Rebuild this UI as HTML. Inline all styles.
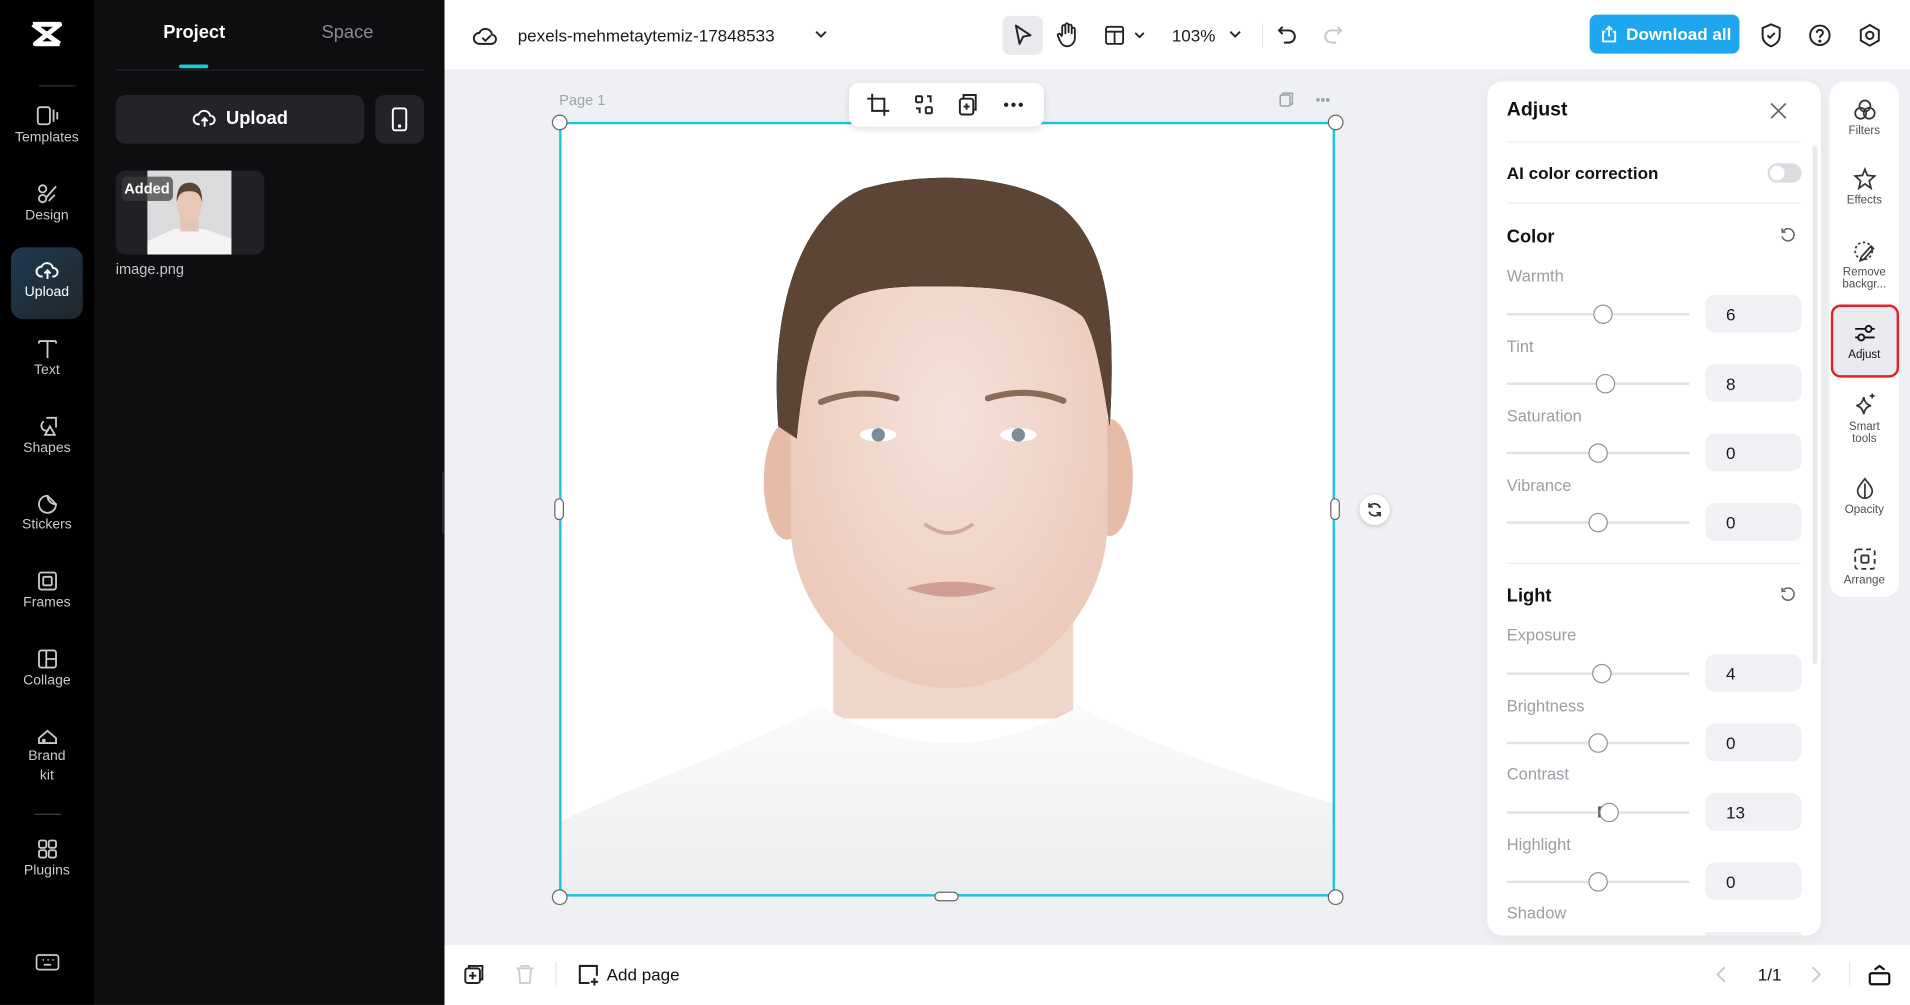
<!DOCTYPE html>
<html><head><meta charset="utf-8"><style>
*{box-sizing:border-box;margin:0;padding:0}
html,body{width:1910px;height:1005px;overflow:hidden;background:#fff}
#s{position:absolute;left:0;top:0;width:1568px;height:825px;transform:scale(1.21811);transform-origin:0 0;font-family:"Liberation Sans",sans-serif;overflow:hidden;background:#fff}
.a{position:absolute}
.rail{left:0;top:0;width:78px;height:825px;background:#000}
.ri{position:absolute;left:0;width:77px;text-align:center;color:#c9cacc;font-size:11.5px}
.ri svg{display:block;margin:0 auto 3px}
.panel{left:77px;top:0;width:288px;height:825px;background:#0e0e10}
.lbl{position:absolute;left:1237px;font-size:13.5px;color:#9a9ea5}
.trk{position:absolute;left:1237px;width:150px;height:2px;background:#dfe2e6}
.th{position:absolute;width:16px;height:16px;border-radius:50%;background:#fff;border:1px solid #8d939b}
.in{position:absolute;left:1400px;width:79px;height:31px;border-radius:8px;background:#eff1f4;font-size:14px;color:#1a1a1a;padding:8px 0 0 17px}
.rt{position:absolute;left:1502px;width:57px;text-align:center;font-size:9.5px;color:#4a4f57;line-height:10px}
.rt svg{display:block;margin:0 auto 3px}
</style></head><body><div id="s">
<div class="a rail"></div>
<svg class="a" style="left:24px;top:16px" width="28" height="24" viewBox="0 0 28 24"><path d="M3 4h22L5 20h20M3 4l22 16" stroke="#fff" stroke-width="4" fill="none" stroke-linejoin="round"/></svg>
<div class="a" style="left:32px;top:70px;width:30px;height:1px;background:#333"></div>
<div class="ri" style="top:86px"><svg width="20" height="18" viewBox="0 0 20 18" fill="none" stroke="#c9cacc" stroke-width="1.5"><rect x="2" y="2" width="10" height="14" rx="2"/><path d="M15 4v10M18 6v6"/></svg>Templates</div>
<div class="ri" style="top:150px"><svg width="20" height="18" viewBox="0 0 20 18" fill="none" stroke="#c9cacc" stroke-width="1.5"><circle cx="6" cy="5" r="3"/><circle cx="6" cy="13" r="3"/><path d="M9 12l8-9M11 15l5-5"/></svg>Design</div>
<div class="a" style="left:9px;top:203px;width:59px;height:59px;border-radius:10px;background:linear-gradient(135deg,#1d3a52,#222629)"></div>
<div class="ri" style="top:213px;color:#fff"><svg width="20" height="18" viewBox="0 0 20 18" fill="none" stroke="#fff" stroke-width="1.6"><path d="M6 14H5a4 4 0 010-8 5 5 0 019.5 1A3.5 3.5 0 0115 14h-1M10 16V9M7.5 11.5L10 9l2.5 2.5"/></svg>Upload</div>
<div class="ri" style="top:277px"><svg width="20" height="18" viewBox="0 0 20 18" fill="none" stroke="#c9cacc" stroke-width="1.5"><path d="M3 3h14M10 3v14M3 3v2M17 3v2"/></svg>Text</div>
<div class="ri" style="top:341px"><svg width="20" height="18" viewBox="0 0 20 18" fill="none" stroke="#c9cacc" stroke-width="1.5"><path d="M7 5a4 4 0 104 7M9 2h8v8M8 16l4-7 4 7z"/></svg>Shapes</div>
<div class="ri" style="top:404px"><svg width="20" height="18" viewBox="0 0 20 18" fill="none" stroke="#c9cacc" stroke-width="1.5"><path d="M17 10a7 7 0 11-7-7c0 4 3 7 7 7zM10 3l7 7"/></svg>Stickers</div>
<div class="ri" style="top:468px"><svg width="20" height="18" viewBox="0 0 20 18" fill="none" stroke="#c9cacc" stroke-width="1.5"><rect x="3" y="2" width="14" height="14" rx="2"/><rect x="6.5" y="5.5" width="7" height="7" rx="1"/></svg>Frames</div>
<div class="ri" style="top:532px"><svg width="20" height="18" viewBox="0 0 20 18" fill="none" stroke="#c9cacc" stroke-width="1.5"><rect x="3" y="2" width="14" height="14" rx="2"/><path d="M9 2v14M9 9h8"/></svg>Collage</div>
<div class="ri" style="top:595px;line-height:16px"><svg width="20" height="18" viewBox="0 0 20 18" fill="none" stroke="#c9cacc" stroke-width="1.5" style="margin-bottom:0"><path d="M3 15h14v-4L10 5 3 11z"/><circle cx="7" cy="13" r="0.8"/></svg>Brand<br>kit</div>
<div class="a" style="left:28px;top:668px;width:22px;height:1px;background:#444"></div>
<div class="ri" style="top:688px"><svg width="20" height="18" viewBox="0 0 20 18" fill="none" stroke="#c9cacc" stroke-width="1.5"><rect x="3" y="2" width="6" height="6" rx="1.5"/><rect x="11" y="2" width="6" height="6" rx="1.5"/><rect x="3" y="10" width="6" height="6" rx="1.5"/><rect x="11" y="10" width="6" height="6" rx="1.5"/></svg>Plugins</div>
<svg class="a" style="left:29px;top:783px" width="20" height="15" viewBox="0 0 20 15" fill="none" stroke="#c9cacc" stroke-width="1.4"><rect x="1" y="1" width="18" height="12" rx="2"/><path d="M6 5h1M10 5h1M14 5h1M7 9h6"/></svg>

<div class="a panel"></div>
<div class="a" style="left:134px;top:18px;font-size:15px;font-weight:bold;color:#fff">Project</div>
<div class="a" style="left:264px;top:18px;font-size:15px;color:#8a8c91">Space</div>
<div class="a" style="left:147px;top:53px;width:24px;height:3px;border-radius:2px;background:#1ec7dc"></div>
<div class="a" style="left:95px;top:57px;width:253px;height:1px;background:#26272b"></div>
<div class="a" style="left:95px;top:78px;width:204px;height:40px;border-radius:8px;background:#232428;color:#fff;font-size:15px;font-weight:bold;text-align:center;line-height:40px"><svg width="20" height="16" viewBox="0 0 20 16" fill="none" stroke="#fff" stroke-width="1.6" style="vertical-align:-3px;margin-right:8px"><path d="M6 13H5a4 4 0 010-8 5 5 0 019.5 1A3.5 3.5 0 0115 13h-1M10 15V8M7.5 10.5L10 8l2.5 2.5"/></svg>Upload</div>
<div class="a" style="left:308px;top:78px;width:40px;height:40px;border-radius:8px;background:#232428"><svg style="position:absolute;left:13px;top:10px" width="14" height="20" viewBox="0 0 14 20" fill="none" stroke="#fff" stroke-width="1.6"><rect x="1.5" y="1" width="11" height="18" rx="2"/><circle cx="7" cy="15.5" r="0.6" fill="#fff"/></svg></div>
<div class="a" style="left:95px;top:140px;width:122px;height:69px;border-radius:8px;background:#202125;overflow:hidden">
<div class="a" style="left:26px;top:0;width:69px;height:69px;background:#dadbdd">
<svg width="69" height="69" viewBox="0 0 69 69"><path d="M0 69V58l22-10h25l22 8v13z" fill="#f4f4f4"/><rect x="27" y="36" width="15" height="14" fill="#e1c4b6"/><ellipse cx="34.5" cy="28" rx="10" ry="14" fill="#e6c7b8"/><path d="M24 26c0-12 4-16 10.5-16S45 14 45 26c-2-6-3-9-10.5-9S26 20 24 26z" fill="#5a4535"/></svg></div>
<div class="a" style="left:5px;top:5px;width:42px;height:20px;border-radius:4px;background:rgba(60,60,60,.7);color:#fff;font-size:12px;font-weight:bold;padding:3px 0 0 2px">Added</div></div>
<div class="a" style="left:95px;top:214px;font-size:12px;color:#c7c8cb">image.png</div>
<div class="a" style="left:363px;top:388px;width:8px;height:50px;border-radius:0 6px 6px 0;background:#2a2b2f"></div>

<!-- top bar -->
<div class="a" style="left:365px;top:0;width:1203px;height:57px;background:#fff"></div>
<svg class="a" style="left:388px;top:19px" width="22" height="20" viewBox="0 0 22 20" fill="none" stroke="#222" stroke-width="1.6"><path d="M6 17H5.5a4.5 4.5 0 010-9 5.5 5.5 0 0110.5 1.5A3.8 3.8 0 0116 17z"/><path d="M8 12l2.5 2.5L15 10"/></svg>
<div class="a" style="left:425px;top:21px;font-size:14px;color:#1a1a1a">pexels-mehmetaytemiz-17848533</div>
<svg class="a" style="left:668px;top:24px" width="12" height="8" viewBox="0 0 12 8"><path d="M2 2l4 4 4-4" stroke="#222" stroke-width="1.5" fill="none"/></svg>
<div class="a" style="left:823px;top:13px;width:33px;height:32px;border-radius:6px;background:#e8eaed"></div>
<svg class="a" style="left:831px;top:19px" width="18" height="20" viewBox="0 0 18 20" fill="none" stroke="#222" stroke-width="1.6"><path d="M3 2l12 8-6 1-3 6z" stroke-linejoin="round"/></svg>
<svg class="a" style="left:866px;top:18px" width="20" height="22" viewBox="0 0 20 22" fill="none" stroke="#222" stroke-width="1.5"><path d="M6 11V4a1.3 1.3 0 012.6 0v6M8.6 9V2.5a1.3 1.3 0 012.6 0V9M11.2 9V3.5a1.3 1.3 0 012.6 0V10M13.8 10V6a1.3 1.3 0 012.6 0v7c0 4-3 7-6.5 7-3 0-4.5-2-6-5L2.5 11.5a1.2 1.2 0 012-1.3L6 12"/></svg>
<svg class="a" style="left:906px;top:20px" width="36" height="18" viewBox="0 0 36 18" fill="none" stroke="#222" stroke-width="1.5"><rect x="2" y="2" width="14" height="14" rx="1.5"/><path d="M2 6h14M9 6v10M26 7l3.5 3.5L33 7"/></svg>
<div class="a" style="left:962px;top:21px;font-size:14px;color:#1a1a1a">103%</div>
<svg class="a" style="left:1008px;top:24px" width="12" height="8" viewBox="0 0 12 8"><path d="M2 2l4 4 4-4" stroke="#222" stroke-width="1.5" fill="none"/></svg>
<div class="a" style="left:1036px;top:19px;width:1px;height:20px;background:#e3e5e8"></div>
<svg class="a" style="left:1047px;top:19px" width="20" height="20" viewBox="0 0 20 20" fill="none" stroke="#222" stroke-width="1.6"><path d="M6 3L3 6l3 3M3 6h8a5 5 0 010 10H7"/></svg>
<svg class="a" style="left:1084px;top:19px" width="20" height="20" viewBox="0 0 20 20" fill="none" stroke="#c5c8cc" stroke-width="1.6"><path d="M14 3l3 3-3 3M17 6H9a5 5 0 000 10h4"/></svg>
<div class="a" style="left:1305px;top:12px;width:123px;height:32px;border-radius:6px;background:#1ea7ee;color:#fff;font-size:14px;font-weight:bold;line-height:32px;padding-left:30px">Download all</div>
<svg class="a" style="left:1313px;top:20px" width="16" height="16" viewBox="0 0 16 16" fill="none" stroke="#fff" stroke-width="1.5"><path d="M5 6H3v8h10V6h-2M8 10V2M5.5 4.5L8 2l2.5 2.5"/></svg>
<svg class="a" style="left:1444px;top:18px" width="20" height="22" viewBox="0 0 20 22" fill="none" stroke="#222" stroke-width="1.6"><path d="M10 2l7 3v6c0 4.5-3 7.5-7 9-4-1.5-7-4.5-7-9V5z"/><path d="M7 11l2 2 4-4"/></svg>
<svg class="a" style="left:1484px;top:19px" width="20" height="20" viewBox="0 0 20 20" fill="none" stroke="#222" stroke-width="1.6"><circle cx="10" cy="10" r="8"/><path d="M7.5 8a2.5 2.5 0 115 0c0 1.8-2.5 2-2.5 4"/><circle cx="10" cy="14.8" r="0.5" fill="#222"/></svg>
<svg class="a" style="left:1525px;top:19px" width="20" height="20" viewBox="0 0 20 20" fill="none" stroke="#222" stroke-width="1.6"><path d="M10 1.5l7.4 4.25v8.5L10 18.5l-7.4-4.25v-8.5z"/><circle cx="10" cy="10" r="3"/></svg>

<!-- canvas -->
<div class="a" style="left:365px;top:57px;width:1203px;height:719px;background:#eef0f3"></div>
<div class="a" style="left:459px;top:75px;font-size:12px;color:#a0a4aa">Page 1</div>
<svg class="a" style="left:1049px;top:75px" width="48" height="14" viewBox="0 0 48 14" fill="none" stroke="#9ba0a6" stroke-width="1.2"><rect x="2" y="3" width="8" height="9" rx="1"/><path d="M4 3V1.5h8v9h-2"/><circle cx="33" cy="7" r=".9" fill="#9ba0a6"/><circle cx="37" cy="7" r=".9" fill="#9ba0a6"/><circle cx="41" cy="7" r=".9" fill="#9ba0a6"/></svg>
<div class="a" style="left:459px;top:100px;width:637px;height:636px;background:#fff;overflow:hidden">
<svg width="637" height="636" viewBox="0 0 637 636">
<defs><radialGradient id="sk" cx="50%" cy="45%" r="60%"><stop offset="0" stop-color="#f5e2da"/><stop offset="1" stop-color="#ebc9ba"/></radialGradient>
<linearGradient id="sh" x1="0" y1="0" x2="0" y2="1"><stop offset="0" stop-color="#fafafa"/><stop offset="1" stop-color="#eceef0"/></linearGradient></defs>
<path d="M225 380h197v110H225z" fill="#efd6cb"/>
<path d="M0 636V575C60 545 150 515 215 480q105 60 212 0C480 510 570 540 637 560V636z" fill="url(#sh)"/>
<ellipse cx="187" cy="295" rx="19" ry="48" fill="#e6bca9"/>
<ellipse cx="452" cy="292" rx="19" ry="48" fill="#e6bca9"/>
<path d="M190 180C190 120 240 60 320 60S450 120 450 180V330c0 70-60 135-130 135S190 400 190 330z" fill="url(#sk)"/>
<path d="M180 250C172 150 200 75 250 55 300 40 370 43 410 68 448 98 458 150 452 250 445 205 440 175 430 160 400 135 340 135 300 135 250 135 225 145 212 170 202 200 198 230 195 260z" fill="#5e4migration"/>
<path d="M180 250C172 150 200 75 250 55 300 40 370 43 410 68 448 98 458 150 452 250 445 205 440 175 430 160 400 135 340 135 300 135 250 135 225 145 212 170 202 200 198 230 195 260z" fill="#5c4535"/>
<path d="M215 230q30-12 62-3M352 227q32-10 62 2" stroke="#8a6a58" stroke-width="5" fill="none" stroke-linecap="round"/>
<ellipse cx="262" cy="257" rx="15" ry="5.5" fill="#fff"/><circle cx="262" cy="257" r="5.5" fill="#7d8c99"/>
<ellipse cx="377" cy="257" rx="15" ry="5.5" fill="#fff"/><circle cx="377" cy="257" r="5.5" fill="#7d8c99"/>
<path d="M300 330q20 15 40 0" stroke="#d2a898" stroke-width="3" fill="none"/>
<path d="M285 383q37-11 74 0q-37 14-74 0z" fill="#d09e94"/>
</svg></div>
<div class="a" style="left:459px;top:100px;width:637px;height:636px;border:2px solid #1dc4dc"></div>
<div class="a" style="left:453px;top:94px;width:13px;height:13px;border-radius:50%;background:#fff;border:1px solid #666"></div>
<div class="a" style="left:1090px;top:94px;width:13px;height:13px;border-radius:50%;background:#fff;border:1px solid #666"></div>
<div class="a" style="left:453px;top:730px;width:13px;height:13px;border-radius:50%;background:#fff;border:1px solid #666"></div>
<div class="a" style="left:1090px;top:730px;width:13px;height:13px;border-radius:50%;background:#fff;border:1px solid #666"></div>
<div class="a" style="left:455px;top:409px;width:8px;height:18px;border-radius:4px;background:#fff;border:1px solid #666"></div>
<div class="a" style="left:1092px;top:409px;width:8px;height:18px;border-radius:4px;background:#fff;border:1px solid #666"></div>
<div class="a" style="left:767px;top:732px;width:20px;height:8px;border-radius:4px;background:#fff;border:1px solid #666"></div>
<div class="a" style="left:1116px;top:406px;width:25px;height:25px;border-radius:50%;background:#fff;box-shadow:0 1px 4px rgba(0,0,0,.2)"><svg style="position:absolute;left:5px;top:5px" width="15" height="15" viewBox="0 0 15 15" fill="none" stroke="#333" stroke-width="1.4"><path d="M12 6a5 5 0 00-9-1M3 9a5 5 0 009 1M3 2v3h3M12 13v-3H9"/></svg></div>
<div class="a" style="left:697px;top:68px;width:160px;height:36px;border-radius:8px;background:#fff;box-shadow:0 2px 6px rgba(0,0,0,.12)"></div>
<svg class="a" style="left:710px;top:75px" width="140" height="22" viewBox="0 0 140 22" fill="none" stroke="#222" stroke-width="1.6"><path d="M6 2v14h14M2 6h14v14"/><rect x="42" y="4" width="5" height="5" rx="1"/><rect x="50" y="13" width="5" height="5" rx="1"/><path d="M51 4h3v5M42 14h3v4"/><rect x="78" y="6" width="11" height="13" rx="2"/><path d="M81 6V3h10v12h-2M83.5 10v5M81 12.5h5"/><circle cx="116" cy="11" r="1" fill="#222"/><circle cx="122" cy="11" r="1" fill="#222"/><circle cx="128" cy="11" r="1" fill="#222"/></svg>

<!-- adjust panel -->
<div class="a" style="left:1221px;top:67px;width:274px;height:701px;border-radius:12px;background:#fff;box-shadow:0 2px 10px rgba(0,0,0,.06)"></div>
<div class="a" style="left:1237px;top:82px;font-size:16px;font-weight:bold;color:#111">Adjust</div>
<svg class="a" style="left:1453px;top:84px" width="14" height="14" viewBox="0 0 14 14" stroke="#666" stroke-width="1.4"><path d="M1 1l12 12M13 1L1 13"/></svg>
<div class="a" style="left:1237px;top:116px;width:242px;height:1px;background:#eceef0"></div>
<div class="a" style="left:1237px;top:134px;font-size:14px;font-weight:bold;color:#111">AI color correction</div>
<div class="a" style="left:1451px;top:134px;width:28px;height:16px;border-radius:8px;background:#d9dde2"><div class="a" style="left:2px;top:2px;width:12px;height:12px;border-radius:50%;background:#fff"></div></div>
<div class="a" style="left:1237px;top:166px;width:242px;height:1px;background:#eceef0"></div>
<div class="a" style="left:1488px;top:120px;width:4px;height:425px;border-radius:2px;background:#e6e8eb"></div>
<div class="a" style="left:1237px;top:186px;font-size:15px;font-weight:bold;color:#111">Color</div>
<svg class="a" style="left:1461px;top:186px" width="14" height="14" viewBox="0 0 14 14" fill="none" stroke="#666" stroke-width="1.3"><path d="M3 3.5A5 5 0 112 8M2 1.5v3h3"/></svg>
<div class="lbl" style="top:219px">Warmth</div><div class="trk" style="top:257px"></div><div class="th" style="left:1308px;top:250px"></div><div class="in" style="top:242px">6</div>
<div class="lbl" style="top:277px">Tint</div><div class="trk" style="top:314px"></div><div class="th" style="left:1310px;top:307px"></div><div class="in" style="top:299px">8</div>
<div class="lbl" style="top:334px">Saturation</div><div class="trk" style="top:371px"></div><div class="th" style="left:1304px;top:364px"></div><div class="in" style="top:356px">0</div>
<div class="lbl" style="top:391px">Vibrance</div><div class="trk" style="top:428px"></div><div class="th" style="left:1304px;top:421px"></div><div class="in" style="top:413px">0</div>
<div class="a" style="left:1237px;top:462px;width:242px;height:1px;background:#eceef0"></div>
<div class="a" style="left:1237px;top:481px;font-size:15px;font-weight:bold;color:#111">Light</div>
<svg class="a" style="left:1461px;top:481px" width="14" height="14" viewBox="0 0 14 14" fill="none" stroke="#666" stroke-width="1.3"><path d="M3 3.5A5 5 0 112 8M2 1.5v3h3"/></svg>
<div class="lbl" style="top:514px">Exposure</div><div class="trk" style="top:552px"></div><div class="th" style="left:1307px;top:545px"></div><div class="in" style="top:537px">4</div>
<div class="lbl" style="top:572px">Brightness</div><div class="trk" style="top:609px"></div><div class="th" style="left:1304px;top:602px"></div><div class="in" style="top:594px">0</div>
<div class="lbl" style="top:628px">Contrast</div><div class="trk" style="top:666px"></div><div class="a" style="left:1312px;top:662px;width:3px;height:9px;background:#555"></div><div class="th" style="left:1313px;top:659px"></div><div class="in" style="top:651px">13</div>
<div class="lbl" style="top:686px">Highlight</div><div class="trk" style="top:723px"></div><div class="th" style="left:1304px;top:716px"></div><div class="in" style="top:708px">0</div>
<div class="lbl" style="top:742px">Shadow</div>
<div class="in" style="top:765px;height:3px;padding:0"></div>

<!-- right rail -->
<div class="a" style="left:1502px;top:67px;width:57px;height:423px;border-radius:12px;background:#fff"></div>
<div class="rt" style="top:80px"><svg width="20" height="20" viewBox="0 0 20 20" fill="none" stroke="#333" stroke-width="1.4"><circle cx="10" cy="7" r="4.5"/><circle cx="6.5" cy="13" r="4.5"/><circle cx="13.5" cy="13" r="4.5"/></svg>Filters</div>
<div class="rt" style="top:137px"><svg width="20" height="20" viewBox="0 0 20 20" fill="none" stroke="#333" stroke-width="1.4"><path d="M10 2l2 5 6 .5-4.5 4 1.5 6L10 14l-5 3.5 1.5-6L2 7.5 8 7z"/></svg>Effects</div>
<div class="rt" style="top:196px"><svg width="20" height="20" viewBox="0 0 20 20" fill="none" stroke="#333" stroke-width="1.4"><circle cx="9" cy="10" r="7" stroke-dasharray="2 2"/><path d="M7 15l8-9 2 2-8 9-3 1z"/></svg>Remove<br>backgr...</div>
<div class="a" style="left:1505px;top:252px;width:52px;height:56px;border-radius:6px;background:#e8eaed;outline:2px solid #e5202a;outline-offset:0"></div>
<div class="rt" style="top:264px;color:#111"><svg width="20" height="20" viewBox="0 0 20 20" fill="none" stroke="#111" stroke-width="1.5"><path d="M2 6h16M2 13h16"/><circle cx="13" cy="6" r="2.5" fill="#e8eaed"/><circle cx="7" cy="13" r="2.5" fill="#e8eaed"/></svg>Adjust</div>
<div class="rt" style="top:321px"><svg width="22" height="22" viewBox="0 0 22 22" fill="none" stroke="#333" stroke-width="1.4"><path d="M10 5q1 6 6 7-5 1-6 7-1-6-6-7 5-1 6-7zM17 2v4M15 4h4"/></svg>Smart<br>tools</div>
<div class="rt" style="top:391px"><svg width="20" height="20" viewBox="0 0 20 20" fill="none" stroke="#333" stroke-width="1.4"><path d="M10 2c3 4 6 7 6 10a6 6 0 01-12 0c0-3 3-6 6-10z"/><path d="M10 6v12" /></svg>Opacity</div>
<div class="rt" style="top:449px"><svg width="20" height="20" viewBox="0 0 20 20" fill="none" stroke="#333" stroke-width="1.5"><rect x="2" y="2" width="16" height="16" rx="2" stroke-dasharray="4 3"/><rect x="7" y="7" width="6" height="6" rx="1"/></svg>Arrange</div>

<!-- bottom bar -->
<div class="a" style="left:365px;top:776px;width:1203px;height:49px;background:#fff"></div>
<svg class="a" style="left:380px;top:790px" width="20" height="20" viewBox="0 0 20 20" fill="none" stroke="#222" stroke-width="1.6"><rect x="2" y="5" width="12" height="12" rx="2"/><path d="M5 5V3h11v11h-2M8 8v6M5 11h6"/></svg>
<svg class="a" style="left:422px;top:790px" width="18" height="20" viewBox="0 0 18 20" fill="none" stroke="#ccd0d4" stroke-width="1.6"><path d="M2 5h14M6 5V3h6v2M4 5l1 12h8l1-12"/></svg>
<div class="a" style="left:456px;top:790px;width:1px;height:20px;background:#e3e5e8"></div>
<svg class="a" style="left:473px;top:790px" width="20" height="20" viewBox="0 0 20 20" fill="none" stroke="#222" stroke-width="1.7"><path d="M11 17H3V3h14v8M15 13v6M12 16h6"/></svg>
<div class="a" style="left:498px;top:792px;font-size:14px;color:#111">Add page</div>
<svg class="a" style="left:1406px;top:792px" width="16" height="16" viewBox="0 0 16 16" fill="none" stroke="#c5c8cc" stroke-width="1.5"><path d="M10 2L4 8l6 6"/></svg>
<div class="a" style="left:1443px;top:792px;font-size:14px;color:#111">1/1</div>
<svg class="a" style="left:1482px;top:792px" width="16" height="16" viewBox="0 0 16 16" fill="none" stroke="#c5c8cc" stroke-width="1.5"><path d="M6 2l6 6-6 6"/></svg>
<div class="a" style="left:1518px;top:790px;width:1px;height:20px;background:#e3e5e8"></div>
<svg class="a" style="left:1533px;top:790px" width="20" height="20" viewBox="0 0 20 20" fill="none" stroke="#111" stroke-width="1.8"><rect x="2" y="9" width="16" height="9" rx="1.5"/><path d="M6 6l4-3 4 3"/></svg>
</div></body></html>
